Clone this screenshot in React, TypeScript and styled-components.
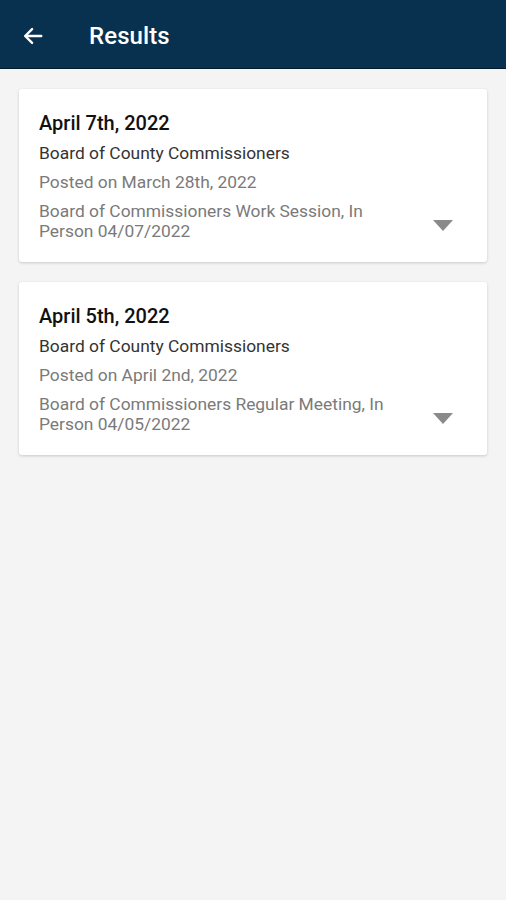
import React from "react";
import styled, { createGlobalStyle } from "styled-components";

const GlobalStyle = createGlobalStyle`
  html, body {
    margin: 0;
    padding: 0;
    background: #f4f4f4;
    font-family: Roboto, "Liberation Sans", sans-serif;
  }
`;

const Page = styled.div`
  min-height: 900px;
  background: #f4f4f4;
`;

const AppBar = styled.header`
  height: 69px;
  background: #07314f;
  border-bottom: 1px solid #021a2c;
  box-sizing: border-box;
  display: flex;
  align-items: center;
  padding: 3px 0 0 22px;
  color: #fff;
`;

const BackButton = styled.button`
  background: none;
  border: 0;
  padding: 0;
  width: 22px;
  height: 22px;
  display: flex;
  align-items: center;
  justify-content: center;
  color: #fff;
`;

const Title = styled.h1`
  margin: 0 0 0 45px;
  font-size: 24px;
  font-weight: 500;
  letter-spacing: 0.1px;
`;

const List = styled.main`
  padding: 20px 19px;
  display: flex;
  flex-direction: column;
  gap: 20px;
`;

const Card = styled.div`
  background: #fff;
  border-radius: 3px;
  box-shadow: 0 1px 3px rgba(0, 0, 0, 0.18);
  padding: 21px 20px 21px 20px;
`;

const CardTitle = styled.div`
  font-size: 20px;
  font-weight: 500;
  line-height: 26px;
  color: #111;
  margin-bottom: -2px;
`;

const Line = styled.div<{ $muted?: boolean }>`
  font-size: 17.4px;
  line-height: 20px;
  margin-top: 9px;
  color: ${(p) => (p.$muted ? "#7a7a7a" : "#333")};
`;

const DescRow = styled.div`
  display: flex;
  align-items: center;
  justify-content: space-between;
`;

const Desc = styled(Line)`
  max-width: 360px;
`;

const Caret = styled.div`
  width: 0;
  height: 0;
  border-left: 10px solid transparent;
  border-right: 10px solid transparent;
  border-top: 11px solid #8a8a8a;
  margin: 18px 14px 0 0;
`;

const meetings = [
  {
    date: "April 7th, 2022",
    board: "Board of County Commissioners",
    posted: "Posted on March 28th, 2022",
    desc: "Board of Commissioners Work Session, In Person 04/07/2022",
  },
  {
    date: "April 5th, 2022",
    board: "Board of County Commissioners",
    posted: "Posted on April 2nd, 2022",
    desc: "Board of Commissioners Regular Meeting, In Person 04/05/2022",
  },
];

const App: React.FC = () => {
  return (
    <Page>
      <GlobalStyle />
      <AppBar>
        <BackButton aria-label="back">
          <svg width="22" height="22" viewBox="0 0 24 24" fill="none" stroke="#fff" strokeWidth="2.6" strokeLinecap="round" strokeLinejoin="round">
            <path d="M21 12H4" />
            <path d="M11 4.5L3.5 12L11 19.5" />
          </svg>
        </BackButton>
        <Title>Results</Title>
      </AppBar>
      <List>
        {meetings.map((m) => (
          <Card key={m.date}>
            <CardTitle>{m.date}</CardTitle>
            <Line>{m.board}</Line>
            <Line $muted>{m.posted}</Line>
            <DescRow>
              <Desc $muted>{m.desc}</Desc>
              <Caret />
            </DescRow>
          </Card>
        ))}
      </List>
    </Page>
  );
};

export default App;
